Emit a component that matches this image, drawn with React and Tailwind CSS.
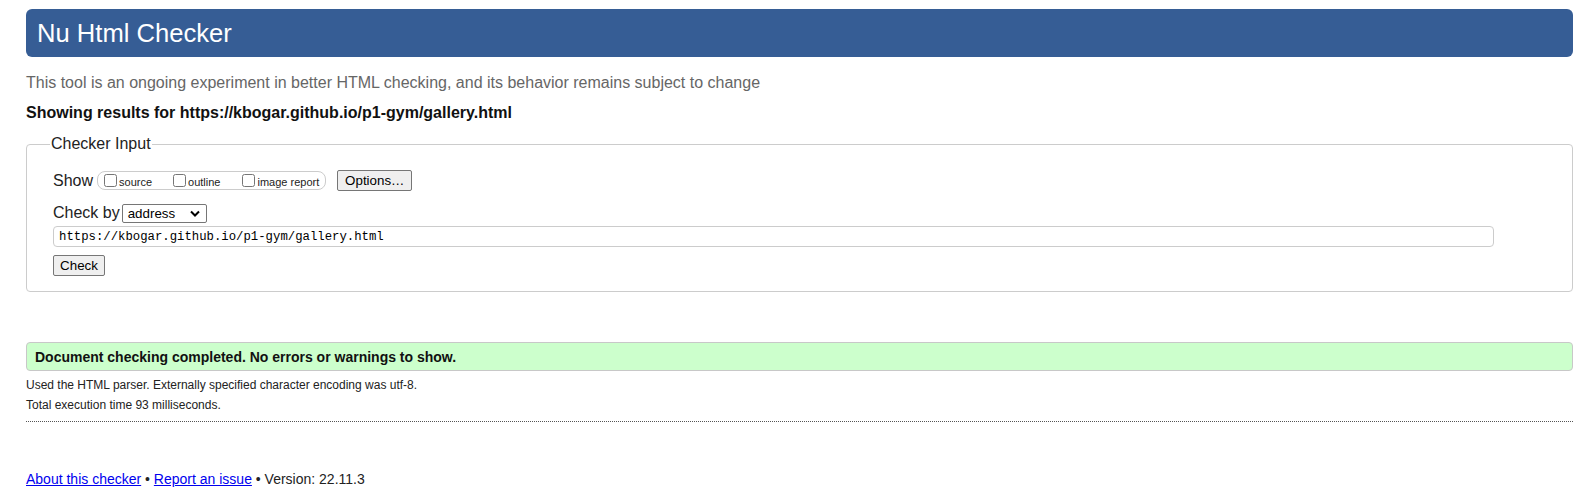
import React from "react";

export default function App() {
  return (
    <div className="w-[1594px] h-[504px] overflow-hidden bg-white pl-[26px] pr-[21px] pt-[9px] text-[#111] font-['Liberation_Sans',Arial,sans-serif]">
      <h1 className="h-[48px] bg-[#365d95] rounded-[6px] text-white text-[25.6px] leading-[28px] pl-[11px] flex items-center font-normal">
        Nu Html Checker
      </h1>
      <p className="mt-[16px] text-[16px] leading-[20px] text-[#666]">
        This tool is an ongoing experiment in better HTML checking, and its behavior remains subject to change
      </p>
      <p className="mt-[10px] text-[16px] leading-[20px] font-bold text-[#111]">
        Showing results for https://kbogar.github.io/p1-gym/gallery.html
      </p>

      <fieldset className="mt-[11px] border border-[#ccc] rounded-[4px] pl-[26px] pb-[15px]">
        <legend className="-ml-[3px] px-[1px] text-[16px] leading-[20px] text-[#222]">Checker Input</legend>

        <div className="mt-[16px] flex items-center h-[21px]">
          <span className="text-[16px] leading-[20px] text-[#222]">Show</span>
          <div className="ml-[4px] flex items-center h-[19px] border border-[#ccc] rounded-[8px] pl-[6px] pr-[6px]">
            <label className="flex items-center">
              <input type="checkbox" className="w-[13px] h-[13px] m-0" />
              <span className="ml-[2px] text-[11px] leading-[13px] mt-[3px] text-[#222]">source</span>
            </label>
            <label className="flex items-center ml-[21px]">
              <input type="checkbox" className="w-[13px] h-[13px] m-0" />
              <span className="ml-[2px] text-[11px] leading-[13px] mt-[3px] text-[#222]">outline</span>
            </label>
            <label className="flex items-center ml-[22px]">
              <input type="checkbox" className="w-[13px] h-[13px] m-0" />
              <span className="ml-[2px] text-[11px] leading-[13px] mt-[3px] text-[#222]">image report</span>
            </label>
          </div>
          <button className="ml-[11px] h-[21px] w-[75px] bg-[#efefef] border border-[#767676] rounded-[2px] text-[13.33px] leading-[15px] text-black flex items-center justify-center">
            Options…
          </button>
        </div>

        <div className="mt-[13px] flex items-center h-[18px]">
          <span className="text-[16px] leading-[20px] text-[#222]">Check by</span>
          <div className="ml-[2px] w-[85px] h-[19px] border border-[#767676] rounded-[2px] flex items-center justify-between pl-[5px] pr-[6px] bg-white">
            <span className="text-[13.33px] leading-[15px] text-black">address</span>
            <svg width="10" height="7" viewBox="0 0 10 7" className="block">
              <path d="M1 1.5 L5 5.5 L9 1.5" fill="none" stroke="#000" strokeWidth="2" />
            </svg>
          </div>
        </div>

        <div className="mt-[4px] w-[1441px] h-[21px] border border-[#ccc] rounded-[4px] flex items-center pl-[5px]">
          <span className="text-[12.3px] leading-[14px] text-black font-['Liberation_Mono','DejaVu_Sans_Mono',monospace]">
            https://kbogar.github.io/p1-gym/gallery.html
          </span>
        </div>

        <button className="mt-[8px] h-[21px] w-[52px] bg-[#efefef] border border-[#767676] rounded-[2px] text-[13.33px] leading-[15px] text-black flex items-center justify-center">
          Check
        </button>
      </fieldset>

      <div className="mt-[50px] h-[29px] bg-[#ccffcc] border border-[#c8c8c8] rounded-[4px] flex items-center pl-[8px]">
        <span className="text-[14px] leading-[18px] font-bold text-[#111]">
          Document checking completed. No errors or warnings to show.
        </span>
      </div>
      <p className="mt-[4px] text-[12px] leading-[20px] text-[#222]">
        Used the HTML parser. Externally specified character encoding was utf-8.
      </p>
      <p className="text-[12px] leading-[20px] text-[#222]">Total execution time 93 milliseconds.</p>
      <div className="mt-[6px] border-t border-dotted border-[#555]" />

      <p className="mt-[47px] text-[14px] leading-[20px] text-[#222]">
        <a href="#" className="text-[#0000ee] underline">About this checker</a>
        {" • "}
        <a href="#" className="text-[#0000ee] underline">Report an issue</a>
        {" • Version: 22.11.3"}
      </p>
    </div>
  );
}
